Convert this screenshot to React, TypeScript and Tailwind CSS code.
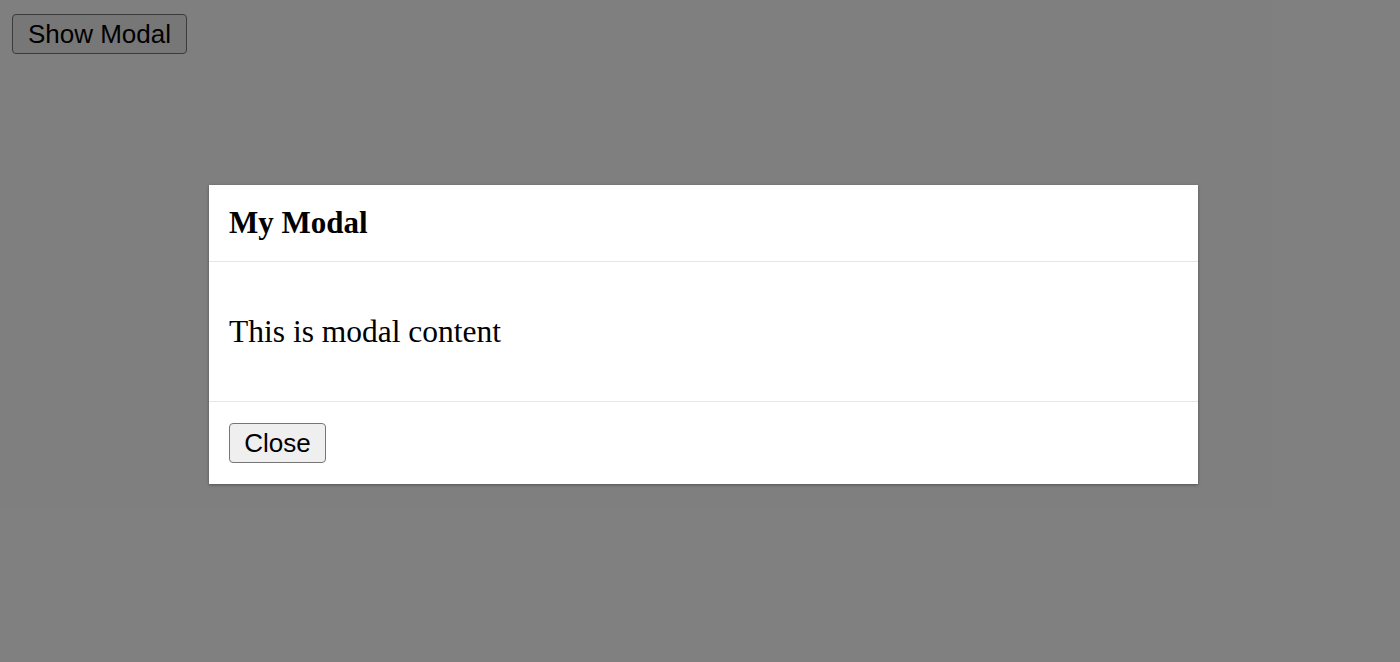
import React from "react"

function App() {
  return (
    <div className="relative h-[662px] w-full bg-white font-['Liberation_Sans',Arial,sans-serif]">
      <div className="pl-[12px] pt-[14px]">
        <button className="h-[40px] w-[175px] rounded-[4px] border-[1.5px] border-[#767676] bg-[#efefef] text-[26px] leading-none text-black">
          Show Modal
        </button>
      </div>

      {/* overlay */}
      <div className="absolute inset-0 bg-black/50 pl-[209px] pt-[185px]">
        <div className="w-[989px] bg-white font-['Liberation_Serif','Times_New_Roman',serif] text-black shadow-[0_1px_3px_rgba(0,0,0,0.35)]">
          <div className="flex h-[77px] items-center border-b border-[#e6e6e6] px-[20px]">
            <h3 className="text-[31px] font-bold leading-normal">My Modal</h3>
          </div>
          <div className="flex h-[140px] items-center border-b border-[#e6e6e6] px-[20px]">
            <p className="text-[31.5px] leading-normal">This is modal content</p>
          </div>
          <div className="flex h-[82px] items-center px-[20px]">
            <button className="h-[40px] w-[97px] rounded-[4px] border-[1.5px] border-[#767676] bg-[#efefef] font-['Liberation_Sans',Arial,sans-serif] text-[26px] leading-none text-black">
              Close
            </button>
          </div>
        </div>
      </div>
    </div>
  )
}

export default App
